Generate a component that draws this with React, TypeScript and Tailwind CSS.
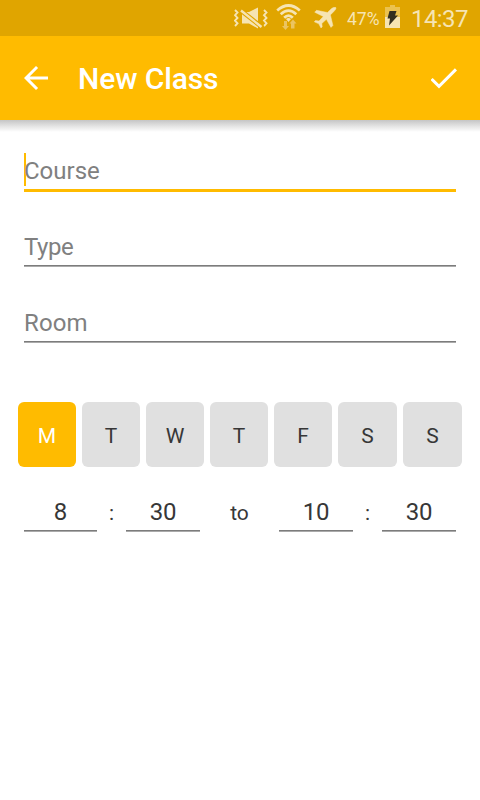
const DAYS = [
  { label: 'M', width: 'w-[58px]', active: true },
  { label: 'T', width: 'w-[58px]' },
  { label: 'W', width: 'w-[58px]' },
  { label: 'T', width: 'w-[58px]' },
  { label: 'F', width: 'w-[58px]' },
  { label: 'S', width: 'w-[59px]' },
  { label: 'S', width: 'w-[59px]' },
]

const MutedVibrateIcon = () => (
  <svg width="34" height="22" viewBox="234 7 34 22" fill="none" stroke="#f6e4b3">
    <path d="M235 10l2.500 2.500-2.500 2.700 2.500 2.700-2.500 2.700 2.500 2.700-2.500 2.700M264 10l2.500 2.500-2.500 2.700 2.500 2.700-2.500 2.700 2.500 2.700-2.500 2.700" strokeWidth="1.900" />
    <path d="M242 12h7l9-4.500v21l-9-5h-7z" fill="#f6e4b3" stroke="none" />
    <path d="M240.500 10.300l22 17.200" stroke="#e0a500" strokeWidth="4.600" />
    <path d="M241 10.500l20.500 16.500" strokeWidth="2.400" />
  </svg>
)

const WifiIcon = () => (
  <svg width="26" height="27" viewBox="276 4 26 27" fill="none">
    <path d="M277.200 10.500q11.300-10 22.600 0M280.700 14.300q7.800-7.200 15.600 0M284.200 17.800q4.300-4.400 8.600 0" stroke="#f6e4b3" strokeWidth="2.700" />
    <path d="M284 21h3v5h2l-3.500 4-3.500-4h2zM291 28.500h3.500v-5h2l-3.500-4-3.500 4h1.500z" fill="#ebc461" />
    <path d="M286 19q2.500-1.800 5 0l-2.500 3z" fill="#f6e4b3" />
  </svg>
)

const PlaneIcon = () => (
  <svg width="24" height="22" viewBox="314 7 24 22" fill="#f6e4b3" stroke="#f6e4b3" strokeWidth="0.500">
    <path d="M335.800 7.500c-2-.7-4 .8-5.500 2.300l-2.800 2.700-11-2.200-1.800 1.900 8.600 4.300-4.300 4.600-3.500-.6-1.200 1.300 4.500 2 2.200 4.200 1.200-1.200-.4-3.300 4.600-4.200 4.600 8.100 1.900-1.900-2.500-10.600 2.700-2.700c1.500-1.500 3.400-3.300 2.700-4.400z" />
  </svg>
)

const BatteryIcon = () => (
  <svg width="15" height="23" viewBox="385 5 15 23">
    <path d="M385 7h5V5h5v2h5v10h-15z" fill="#ebc250" />
    <path d="M385 17h15v11h-15z" fill="#f6e4b3" />
    <path d="M389.500 11h7l-1.500 4.500h3l-9 10 1-7h-2.500z" fill="#332f20" />
  </svg>
)

const StatusBar = () => (
  <div className="flex h-9 bg-[#e0a500] text-[#f6e4b3]">
    <div className="ml-[234px] mt-[7px]"><MutedVibrateIcon /></div>
    <div className="ml-2 mt-1"><WifiIcon /></div>
    <div className="ml-3 mt-[7px]"><PlaneIcon /></div>
    <span className="ml-[9px] mt-[9px] w-[38px] text-[17.5px] leading-5">47%</span>
    <div className="mt-[5px]"><BatteryIcon /></div>
    <span className="ml-[11px] mt-[5px] text-2xl leading-7 tracking-[-0.6px]">14:37</span>
  </div>
)

const AppBar = () => (
  <header className="flex h-[84px] items-center bg-[#ffbb00] text-white">
    <svg className="ml-6 shrink-0" width="24" height="24" viewBox="0 0 24 24" fill="white">
      <path d="M24 10.500H5.700l8.400-8.400L12 0 0 12l12 12 2.100-2.100-8.400-8.400H24z" />
    </svg>
    <h1 className="ml-[30px] pt-0.5 text-[30px] font-medium leading-9 tracking-[-0.1px]">New Class</h1>
    <svg className="ml-auto mr-[22px]" width="27" height="21" viewBox="0.500 0 27 21" fill="white">
      <path d="M8.500 16.200L2.200 9.900 0.100 12l8.400 8.400 18-18L24.400 0.300z" />
    </svg>
  </header>
)

const Underline = () => (
  <div>
    <div className="h-px bg-[#7c7c7c]" />
    <div className="h-px bg-[#aaaaaa]" />
  </div>
)

const TimeField = ({ value, className }: { value: string; className: string }) => (
  <div className={className}>
    <div className="h-[33px] pt-px text-center text-2xl leading-7 tracking-[-0.2px]">{value}</div>
    <Underline />
  </div>
)

const App = () => {
  return (
    <main className="h-[800px] w-[480px] overflow-hidden bg-white font-[Roboto,sans-serif] text-[#373737]">
      <StatusBar />
      <AppBar />
      <div className="h-3 bg-linear-to-b from-[#c5c5c5] via-[#e3e3e3] to-white" />

      <form className="text-[#808080]">
        <div className="mx-6 mt-[21px] h-9 text-2xl">
          <div className="flex h-[33px] items-center">
            <span className="h-[33px] w-0.5 bg-[#ffbb00]" />
            <span className="-ml-0.5 mt-[3px]">Course</span>
          </div>
        </div>
        <div className="mx-6 h-[3px] bg-[#ffbb00]" />
        <div className="mx-6 mt-[41px]">
          <div className="h-8 text-2xl leading-7 tracking-[-0.4px]">Type</div>
          <Underline />
        </div>
        <div className="mx-6 mt-[42px]">
          <div className="h-8 text-2xl leading-7 tracking-[0.1px]">Room</div>
          <Underline />
        </div>
      </form>

      <div className="mt-[59px] flex gap-1.5 pl-[18px]">
        {DAYS.map((day, i) => (
          <div
            key={i}
            className={`${day.width} flex h-[65px] items-center justify-center rounded-md pt-[5px] text-[21px] ${day.active ? 'bg-[#ffbb00] text-white' : 'bg-[#e0e0e0]'}`}
          >
            {day.label}
          </div>
        ))}
      </div>

      <div className="mx-6 mt-[30px] flex">
        <TimeField value="8" className="w-[73px]" />
        <span className="w-[29px] pt-0.5 text-center text-[21px] leading-7">:</span>
        <TimeField value="30" className="w-[74px]" />
        <span className="w-[79px] pt-0.5 text-center text-[21px] leading-7">to</span>
        <TimeField value="10" className="w-[74px]" />
        <span className="w-[29px] pt-0.5 text-center text-[21px] leading-7">:</span>
        <TimeField value="30" className="w-[74px]" />
      </div>
    </main>
  )
}

export default App
